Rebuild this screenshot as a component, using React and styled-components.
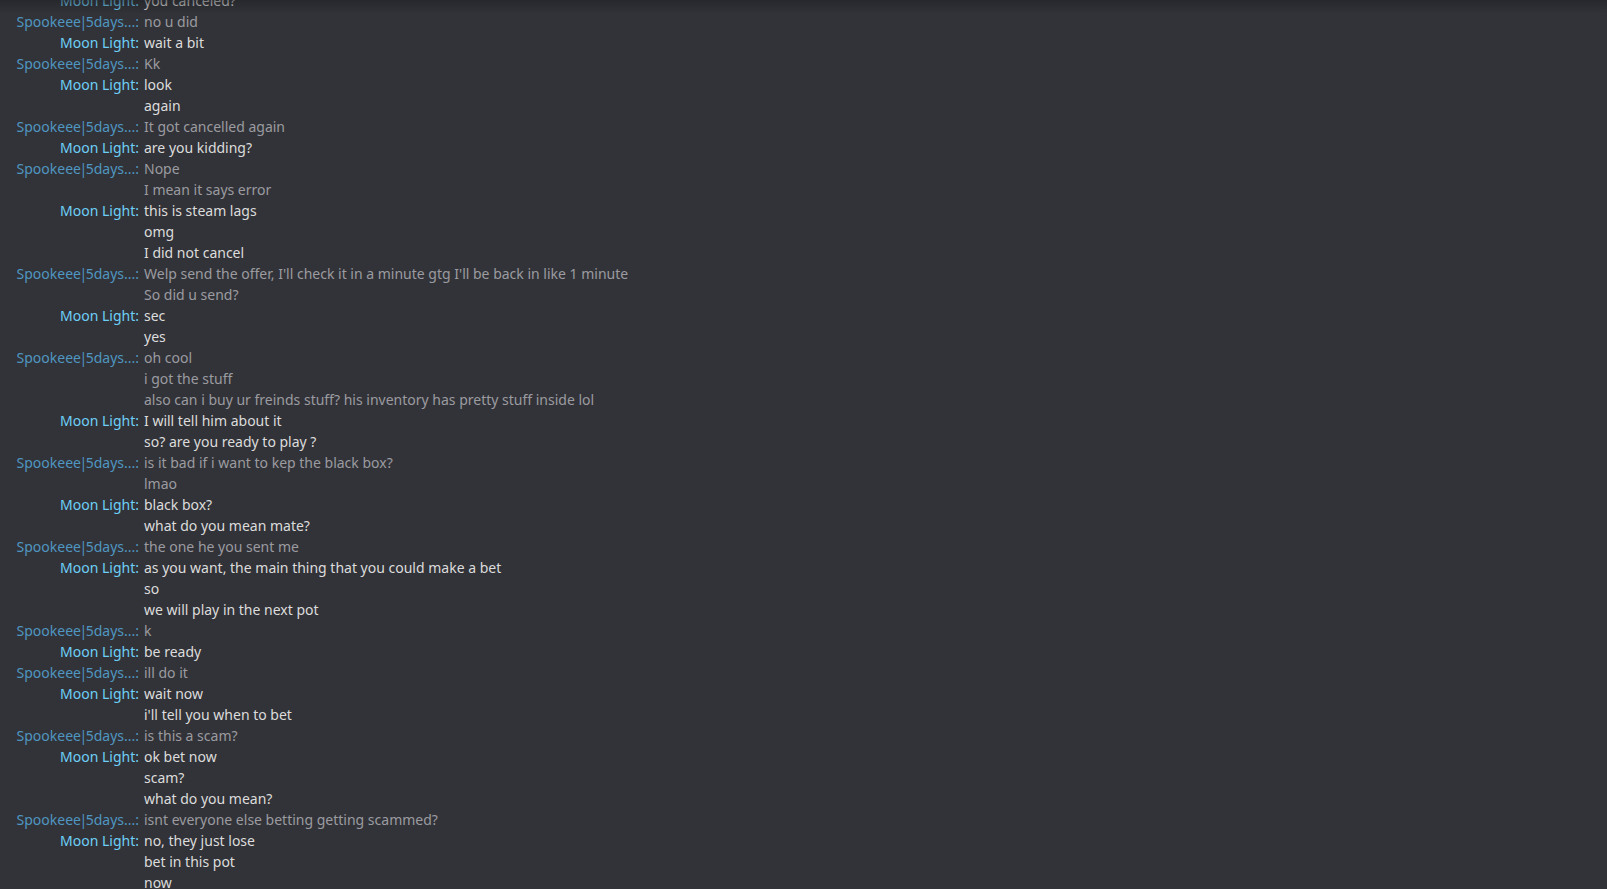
import React from "react";
import styled, { createGlobalStyle } from "styled-components";

const Global = createGlobalStyle`
  html, body { margin: 0; padding: 0; background: #323338; }
  body { overflow: hidden; }
`;

const Page = styled.div`
  position: relative;
  width: 100vw;
  height: 100vh;
  overflow: hidden;
  background: #323338;
  font-family: "Noto Sans", "Open Sans", sans-serif;
  font-size: 14px;
  &::before {
    content: "";
    position: absolute;
    left: 0;
    right: 0;
    top: 0;
    height: 14px;
    background: linear-gradient(to bottom, rgba(30, 31, 35, 0.55), rgba(50, 51, 56, 0));
    pointer-events: none;
    z-index: 2;
  }
`;

const Log = styled.div`
  display: flex;
  flex-direction: column;
  margin-top: -10px;
  padding-left: 16px;
`;

const Row = styled.div`
  display: grid;
  grid-template-columns: 123px 1fr;
  column-gap: 5px;
  height: 21px;
  line-height: 21px;
  white-space: nowrap;
`;

const Name = styled.span`
  display: flex;
  justify-content: flex-end;
  color: ${(p) => (p.$self ? "#6dcff6" : "#4f96c0")};
`;

const Pipe = styled.span`
  margin: 0 -1.5px;
`;

const Text = styled.span`
  color: ${(p) => (p.$self ? "#dcdcdc" : "#9b9ba0")};
`;

const ML = "Moon Light";
const SP = "Spookeee|5days...";

const messages = [
  [ML, "you canceled?"],
  [SP, "no u did"],
  [ML, "wait a bit"],
  [SP, "Kk"],
  [ML, "look"],
  [null, "again", ML],
  [SP, "It got cancelled again"],
  [ML, "are you kidding?"],
  [SP, "Nope"],
  [null, "I mean it says error", SP],
  [ML, "this is steam lags"],
  [null, "omg", ML],
  [null, "I did not cancel", ML],
  [SP, "Welp send the offer, I'll check it in a minute gtg I'll be back in like 1 minute"],
  [null, "So did u send?", SP],
  [ML, "sec"],
  [null, "yes", ML],
  [SP, "oh cool"],
  [null, "i got the stuff", SP],
  [null, "also can i buy ur freinds stuff? his inventory has pretty stuff inside lol", SP],
  [ML, "I will tell him about it"],
  [null, "so? are you ready to play ?", ML],
  [SP, "is it bad if i want to kep the black box?"],
  [null, "lmao", SP],
  [ML, "black box?"],
  [null, "what do you mean mate?", ML],
  [SP, "the one he you sent me"],
  [ML, "as you want, the main thing that you could make a bet"],
  [null, "so", ML],
  [null, "we will play in the next pot", ML],
  [SP, "k"],
  [ML, "be ready"],
  [SP, "ill do it"],
  [ML, "wait now"],
  [null, "i'll tell you when to bet", ML],
  [SP, "is this a scam?"],
  [ML, "ok bet now"],
  [null, "scam?", ML],
  [null, "what do you mean?", ML],
  [SP, "isnt everyone else betting getting scammed?"],
  [ML, "no, they just lose"],
  [null, "bet in this pot", ML],
  [null, "now", ML],
];

function renderName(name) {
  const parts = name.split("|");
  return parts.map((part, i) => (
    <React.Fragment key={i}>
      {i > 0 && <Pipe>|</Pipe>}
      {part}
    </React.Fragment>
  ));
}

export default function App() {
  return (
    <Page>
      <Global />
      <Log>
        {messages.map(([name, text, author], i) => {
          const who = name || author;
          const self = who === ML;
          return (
            <Row key={i}>
              <Name $self={self}>
                {name ? (
                  <span>
                    {renderName(name)}:
                  </span>
                ) : null}
              </Name>
              <Text $self={self}>{text}</Text>
            </Row>
          );
        })}
      </Log>
    </Page>
  );
}
